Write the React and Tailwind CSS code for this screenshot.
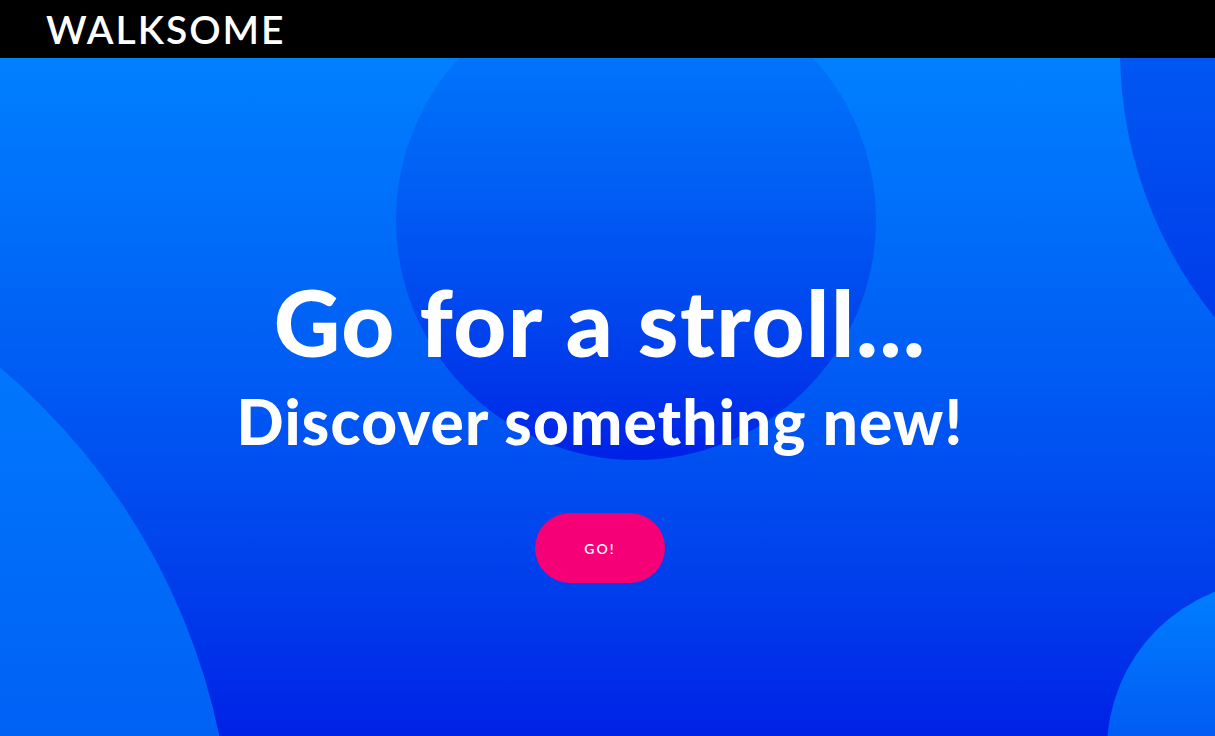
export default function App() {
  return (
    <div className="h-[736px] w-full overflow-hidden flex flex-col font-['Lato',sans-serif]">
      <header className="h-[58px] shrink-0 bg-black flex items-center pl-[46px]">
        <span className="text-[39px] leading-none text-white font-semibold tracking-[0.05em]">WALKSOME</span>
      </header>
      <main className="relative flex-1 overflow-hidden bg-linear-to-b from-[#0080ff] to-[#0020e6]">
        <div className="absolute left-[396px] top-[-78px] w-[480px] h-[480px] rounded-full bg-linear-to-b from-[#0080ff] to-[#0020e6]" />
        <div className="absolute left-[1120px] top-[-433px] w-[850px] h-[850px] rounded-full bg-linear-to-b from-[#0080ff] to-[#0020e6]" />
        <div className="absolute left-[-1079px] top-[155px] w-[1312px] h-[1312px] rounded-full bg-linear-to-b from-[#0080ff] to-[#0020e6]" />
        <div className="absolute left-[1107px] top-[522px] w-[340px] h-[340px] rounded-full bg-linear-to-b from-[#0080ff] to-[#0020e6]" />
        <div className="relative flex flex-col items-center pt-[218px] pr-[15px] text-white">
          <h1 className="text-[92px] leading-none font-black tracking-[0.017em]">Go for a stroll...</h1>
          <h2 className="mt-[22px] text-[62px] leading-none font-black tracking-[0.02em]">Discover something new!</h2>
          <button className="mt-[61px] w-[130px] h-[70px] rounded-full bg-[#f50076] text-white text-[14px] font-semibold tracking-[0.15em]">
            GO!
          </button>
        </div>
      </main>
    </div>
  );
}
